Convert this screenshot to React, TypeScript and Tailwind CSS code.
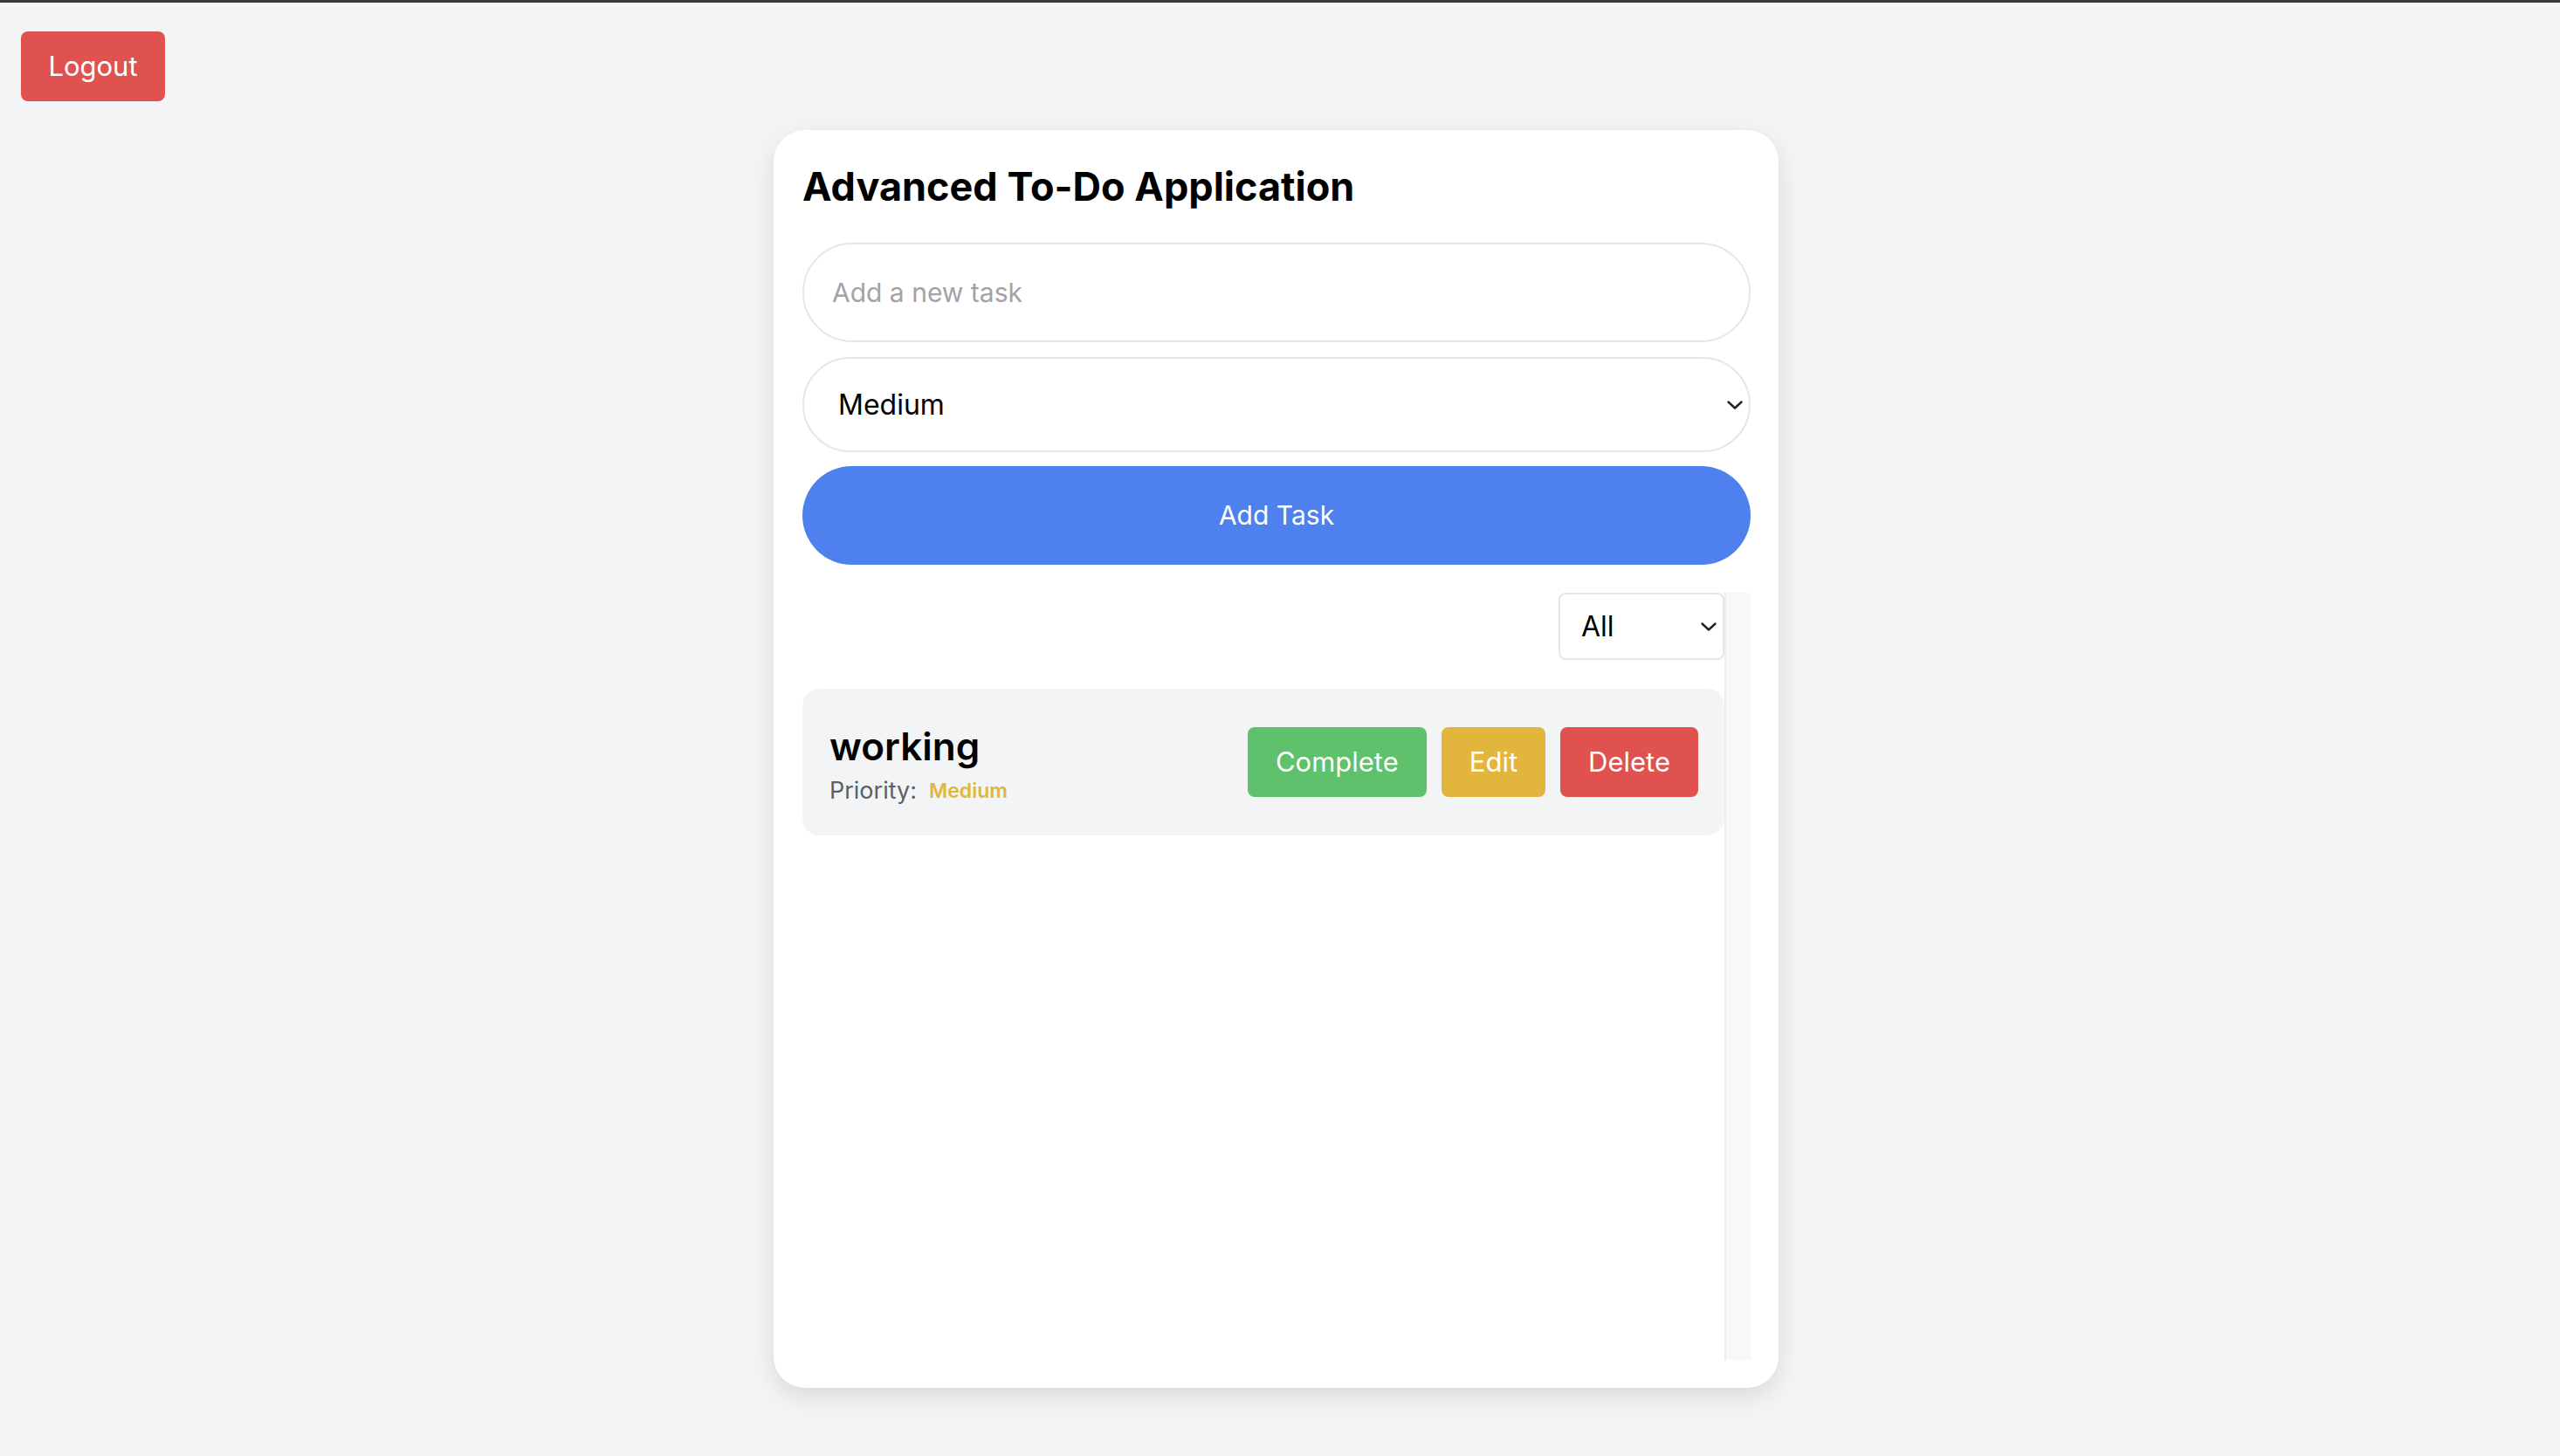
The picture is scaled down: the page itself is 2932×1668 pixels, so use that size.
import { useState } from "react";

type Task = {
  id: number;
  title: string;
  priority: "Low" | "Medium" | "High";
  completed: boolean;
};

const Chevron = ({ className }: { className?: string }) => (
  <svg
    className={className}
    viewBox="0 0 18 10"
    fill="none"
    stroke="currentColor"
    strokeWidth="2.4"
    strokeLinecap="round"
    strokeLinejoin="round"
  >
    <path d="M1.5 1.5 9 8.5l7.5-7" />
  </svg>
);

const TaskItem = ({ task }: { task: Task }) => (
  <div className="mt-[33px] flex h-[168px] items-center justify-between rounded-[20px] bg-[#f3f4f6] pl-[31px] pr-[30px]">
    <div className="mt-[7px] flex flex-col gap-[7px]">
      <span className="text-[44px] font-semibold leading-[52px] text-black">
        {task.title}
      </span>
      <span className="flex items-center text-[27px] leading-[36px] text-[#5b5f66]">
        Priority:
        <span className="ml-[14px] text-[23px] font-semibold text-[#e2b63d]">
          {task.priority}
        </span>
      </span>
    </div>
    <div className="flex items-center gap-[17px]">
      <button className="h-[80px] rounded-[8px] bg-[#5fc16b] px-[32px] text-[31px] text-white">
        Complete
      </button>
      <button className="h-[80px] rounded-[8px] bg-[#e2b63d] px-[32px] text-[31px] text-white">
        Edit
      </button>
      <button className="h-[80px] rounded-[8px] bg-[#df524f] px-[32px] text-[31px] text-white">
        Delete
      </button>
    </div>
  </div>
);

const App = () => {
  const [tasks] = useState<Task[]>([
    { id: 1, title: "working", priority: "Medium", completed: false },
  ]);

  return (
    <div className="min-h-screen border-t-[3px] border-[#3a3a3a] bg-[#f3f4f6] font-['Inter',sans-serif]">
      <button className="ml-[24px] mt-[33px] h-[80px] w-[165px] rounded-[8px] bg-[#df524f] text-[31px] text-white">
        Logout
      </button>

      <div className="mt-[33px] flex justify-center pr-[9px]">
        <div className="flex h-[1441px] w-[1151px] flex-col rounded-[36px] bg-white pb-[32px] pl-[33px] pr-[32px] pt-[37px] shadow-[0_10px_28px_rgba(0,0,0,0.11)]">
          <h1 className="text-[45px] font-bold leading-[56px] text-black">
            Advanced To-Do Application
          </h1>

          <input
            className="mt-[36px] h-[114px] w-full rounded-full border-2 border-[#e6e6e8] px-[32px] text-[30px] outline-none placeholder:text-[#a2a2aa]"
            placeholder="Add a new task"
          />

          <div className="mt-[17px] flex h-[109px] items-center justify-between rounded-full border-2 border-[#e6e6e8] pl-[39px] pr-[7px] text-[32px] text-black">
            <span>Medium</span>
            <Chevron className="h-[10px] w-[18px] text-[#222]" />
          </div>

          <button className="mt-[16px] h-[113px] w-full rounded-full bg-[#4e80ee] text-[30px] text-white">
            Add Task
          </button>

          <div className="mt-[32px] flex min-h-0 flex-1">
            <div className="flex flex-1 flex-col">
              <div className="flex justify-end">
                <div className="flex h-[77px] w-[190px] items-center justify-between rounded-[8px] border-2 border-[#e6e6e8] pl-[24px] pr-[7px] text-[32px] text-black">
                  <span>All</span>
                  <Chevron className="h-[10px] w-[18px] text-[#222]" />
                </div>
              </div>
              {tasks.map((task) => (
                <TaskItem key={task.id} task={task} />
              ))}
            </div>
            <div className="w-[30px] border-l-2 border-[#ececec] bg-[#f8f8f8]" />
          </div>
        </div>
      </div>
    </div>
  );
};

export default App;
